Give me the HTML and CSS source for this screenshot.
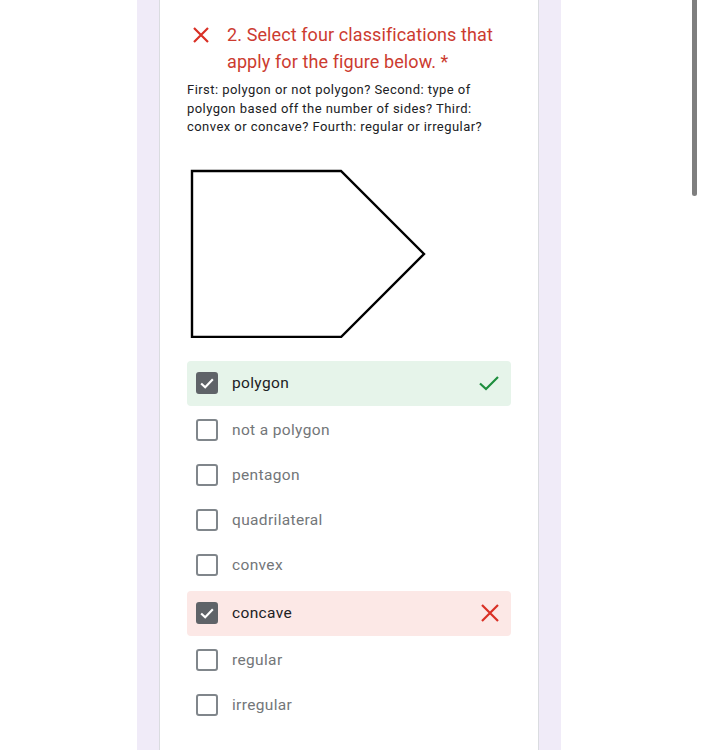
FILE: index.html
```html
<!DOCTYPE html>
<html>
<head>
<meta charset="utf-8">
<link rel="stylesheet" href="styles.css">
</head>
<body>
<div class="page">
  <div class="card">
    <div class="title-row">
      <svg class="title-x" width="18" height="18" viewBox="0 0 18 18"><path d="M2 2 L16 16 M16 2 L2 16" stroke="#d93025" stroke-width="2.2" fill="none"/></svg>
      <div class="title">2. Select four classifications that apply for the figure below. *</div>
    </div>
    <div class="desc">First: polygon or not polygon? Second: type of polygon based off the number of sides? Third: convex or concave? Fourth: regular or irregular?</div>
    <svg class="figure" width="240" height="172" viewBox="0 0 240 172"><polygon points="5,5 154,5 237,88 154,171 5,171" fill="none" stroke="#000" stroke-width="2.4"/></svg>
    <div class="options">
      <div class="opt correct">
        <span class="box checked"><svg width="20" height="20" viewBox="0 0 20 20"><path d="M3.5 10.5 L8 14.8 L16.5 5.8" stroke="#fff" stroke-width="2.4" fill="none"/></svg></span>
        <span class="label">polygon</span>
        <svg class="mark" width="22" height="22" viewBox="0 0 22 22"><path d="M2 11.5 L8 17 L20 5" stroke="#1e8e3e" stroke-width="2.2" fill="none"/></svg>
      </div>
      <div class="opt"><span class="box"></span><span class="label">not a polygon</span></div>
      <div class="opt"><span class="box"></span><span class="label">pentagon</span></div>
      <div class="opt"><span class="box"></span><span class="label">quadrilateral</span></div>
      <div class="opt"><span class="box"></span><span class="label">convex</span></div>
      <div class="opt wrong">
        <span class="box checked"><svg width="20" height="20" viewBox="0 0 20 20"><path d="M3.5 10.5 L8 14.8 L16.5 5.8" stroke="#fff" stroke-width="2.4" fill="none"/></svg></span>
        <span class="label">concave</span>
        <svg class="mark" width="20" height="20" viewBox="0 0 20 20"><path d="M2 2 L18 18 M18 2 L2 18" stroke="#d93025" stroke-width="2.2" fill="none"/></svg>
      </div>
      <div class="opt"><span class="box"></span><span class="label">regular</span></div>
      <div class="opt"><span class="box"></span><span class="label">irregular</span></div>
    </div>
  </div>
</div>
<div class="scrollbar"></div>
</body>
</html>
```
FILE: styles.css
```css
html, body {
  margin: 0;
  padding: 0;
  background: #ffffff;
  font-family: Roboto, "Liberation Sans", Arial, sans-serif;
  overflow: hidden;
}
.page {
  margin-left: 137px;
  width: 380px;
  padding: 0 22px;
  height: 750px;
  background: #f0ebf8;
}
.card {
  box-sizing: border-box;
  width: 380px;
  height: 750px;
  background: #fff;
  border-left: 1px solid #dadce0;
  border-right: 1px solid #dadce0;
  padding: 21px 27px 0 27px;
}
.title-row {
  display: flex;
  align-items: flex-start;
}
.title-x {
  margin: 5px 0 0 5px;
  flex: none;
}
.title {
  margin-left: 17px;
  font-size: 18px;
  line-height: 27px;
  color: #cc3b30;
  letter-spacing: 0.1px;
  width: 290px;
}
.desc {
  margin-top: 6px;
  font-size: 13px;
  line-height: 18.5px;
  color: #202124;
  letter-spacing: 0.45px;
  max-width: 306px;
}
.figure {
  display: block;
  margin: 29px 0 0 0;
}
.options {
  margin-top: 23px;
  display: flex;
  flex-direction: column;
}
.opt {
  display: flex;
  align-items: center;
  height: 45px;
  padding: 0 9px;
  border-radius: 4px;
}
.opt.correct {
  background: #e6f4ea;
  height: 45px;
  margin-bottom: 2px;
}
.opt.wrong {
  background: #fce8e6;
  height: 45px;
  margin: 3px 0 2px;
}
.box {
  box-sizing: border-box;
  width: 22px;
  height: 22px;
  border: 2px solid #80868b;
  border-radius: 3px;
  flex: none;
  display: flex;
  align-items: center;
  justify-content: center;
}
.box.checked {
  background: #5f6368;
  border-color: #5f6368;
}
.label {
  margin-left: 14px;
  font-size: 15.5px;
  color: #737679;
  letter-spacing: 0.35px;
  flex: 1;
}
.correct .label, .wrong .label {
  color: #202124;
}
.mark {
  flex: none;
  margin-right: 2px;
}
.scrollbar {
  position: absolute;
  left: 692px;
  top: 0;
  width: 5px;
  height: 196px;
  background: #7f7f7f;
  border-radius: 0 0 3px 3px;
}
```
